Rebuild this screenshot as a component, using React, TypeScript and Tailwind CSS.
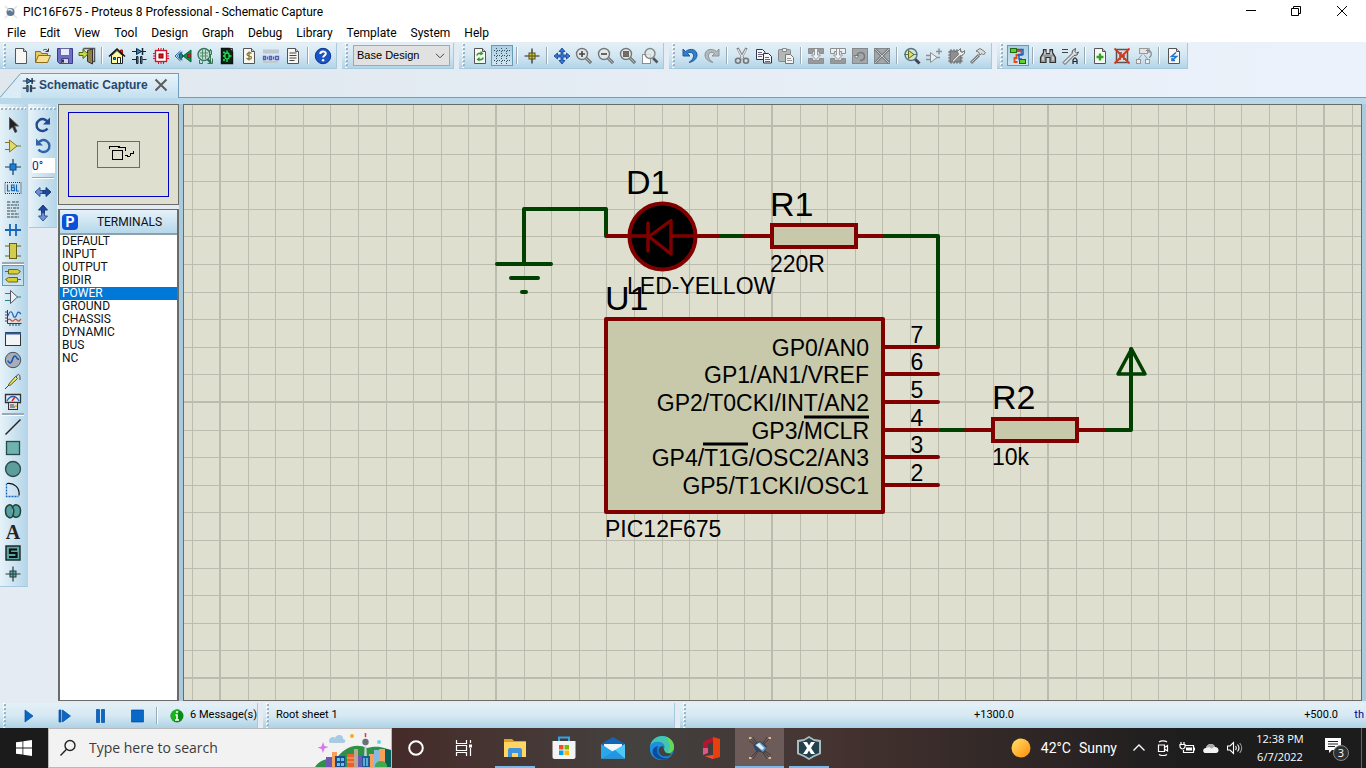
import React from "react";

type Kids = { children?: React.ReactNode };

function Ic({ children }: Kids) {
  return (
    <svg viewBox="0 0 18 18" className="size-[18px] shrink-0" fill="none" stroke="#333" strokeWidth="1">
      {children}
    </svg>
  );
}

const Page = ({ children }: Kids) => (
  <>
    <path d="M3.500 1.500h8l3 3v12h-11z" fill="#f7f8f6" stroke="#555" />
    <path d="M11.500 1.500v3h3" stroke="#555" fill="#ccc" />
    {children}
  </>
);

const Lens = ({ children }: Kids) => (
  <>
    <path d="M11 11l5 5" stroke="#555" strokeWidth="3" />
    <path d="M11 11l4.600 4.600" stroke="#bbb" strokeWidth="1.200" />
    <circle cx="7" cy="7" r="5.500" fill="#e4e8e8" fillOpacity=".75" stroke="#777" strokeWidth="1.400" />
    {children}
  </>
);

const schematicGlyph = (
  <>
    <path d="M2 4.500h14M2 12.500h4M12.500 12.500h4" stroke="#223" strokeWidth="1.200" />
    <path d="M6.500 1.500v6l5-3z" fill="#1c87d6" stroke="#123" />
    <path d="M12.500 1v7" stroke="#123" strokeWidth="1.500" />
    <path d="M6.500 9.500h1.500v7h-1.500zM10.500 9.500h1.500v7h-1.500z" fill="#3ba4ea" stroke="#123" />
  </>
);

const downTool = (filled: boolean) => (
  <>
    <path d="M1.500 1.500h15v5h-4v-2h-7v2h-4z" fill={filled ? "#999" : "#eee"} stroke="#8a8f92" />
    <path d="M1.500 11.500h4v2h7v-2h4v5h-15z" fill="#999" stroke="#8a8f92" />
    <path d="M7.500 2v6h-3l4.500 4.500 4.500-4.500h-3v-6" fill="#f2f2f2" stroke="#999" />
  </>
);

const icons: Record<string, React.ReactNode> = {
  New: <Page />,
  Open: (
    <>
      <path d="M1.500 15.500v-11h5l1 2h6v3" fill="#e8c965" stroke="#8a6d22" />
      <path d="M1.500 15.500l3-7h12l-3 7z" fill="#f9e08c" stroke="#8a6d22" />
      <path d="M9 3.500c2-2 4-1 5 .5M14.500 1.500v3h-3" stroke="#333" />
    </>
  ),
  Save: (
    <>
      <path d="M1.500 1.500h15v15h-13l-2-2z" fill="#6d6fc4" stroke="#3b3b87" />
      <path d="M4.500 1.500h9v7h-9z" fill="#e8eaf8" stroke="#6668a8" />
      <path d="M5.500 11.500h7v5h-7z" fill="#d5d5e5" stroke="#44448a" />
      <path d="M7 12.500v3" stroke="#333" strokeWidth="2" />
    </>
  ),
  Close: (
    <>
      <path d="M5.500 1.500h11v13h-3M5.500 1.500v2" stroke="#555" strokeWidth="1.500" />
      <path d="M9.500 3.500l5-1.500v15l-5-2.500z" fill="#8f8147" stroke="#333" />
      <path d="M1 5.500h4v-3l5 4.500-5 4.500v-3h-4z" fill="#c6dc3c" stroke="#54641a" />
    </>
  ),
  Home: (
    <>
      <path d="M12.500 7v-4h2v6" fill="#d22" stroke="#a11" />
      <path d="M3.500 8.500v8h11v-8l-5.500-5z" fill="#fff9a0" stroke="#222" />
      <path d="M1 9.500l8-7.500 8 7.500" stroke="#111" strokeWidth="1.500" />
      <path d="M5.500 10.500h2v2h-2z" fill="#2a8de0" />
      <path d="M9.500 10.500h3v6h-3z" fill="#fff" stroke="#222" />
    </>
  ),
  "Schematic Capture": schematicGlyph,
  "PCB Layout": (
    <>
      <path d="M6.500 1v16M9 1v16M11.500 1v16M1 6.500h16M1 9h16M1 11.500h16" stroke="#d3152a" />
      <rect x="3.500" y="3.500" width="11" height="11" fill="#fff" stroke="#d3152a" strokeWidth="1.400" />
      <rect x="7" y="7" width="4" height="4" fill="#d3152a" stroke="#800" />
    </>
  ),
  "3D Visualizer": (
    <>
      <path d="M9 9l8-6v12z" fill="#138a41" stroke="#064" />
      <path d="M13.500 7.500h3v3h-3z" fill="#c22" stroke="#822" />
      <path d="M6.500 4L1 9l5.500 5M3.500 9c1-2.500 3-3.500 5-4M3.500 9c1 2.500 3 3.500 5 4" stroke="#26a" />
      <ellipse cx="7" cy="9" rx="1.600" ry="2.600" fill="#138a8a" stroke="#155" />
    </>
  ),
  "Gerber Viewer": (
    <>
      <path d="M3.500 13v3.500h3v-2M11.500 16.500h5v-5M14.500 2v14" stroke="#337a55" />
      <circle cx="8" cy="7.500" r="6" fill="#c5ddd0" stroke="#36775a" strokeWidth="1.400" />
      <path d="M4 6h8M4 9h8M6.500 3v9M9.500 3v9" stroke="#4e9070" />
      <path d="M11.500 12l3.500 4" stroke="#2d6c4d" strokeWidth="2.200" />
      <path d="M13.500 3.500h2v4h-2z" fill="#9cd0a8" stroke="#36775a" />
    </>
  ),
  "Design Explorer": (
    <>
      <path d="M3.500 1.500h8l3 3v12h-11z" fill="#062b12" stroke="#111" strokeWidth="1.400" />
      <path d="M5 9h2M11 9h2.500M9 3.500v2.500M9 12v3M7 7.500c0-2 4-2 4 0v3c0 2-4 2-4 0zM5 5.500h2M5 13h2" stroke="#2be05d" strokeWidth="1.300" />
      <path d="M12 1.500h2.500v3z" fill="#ddd" />
    </>
  ),
  "Bill of Materials": (
    <Page>
      <path d="M11.500 6.500c-1-1.200-4.500-1.200-4.500 1 0 2 4.500 1 4.500 3 0 2.200-4 2-5 .600M9 4.500v9" stroke="#84722a" strokeWidth="1.200" />
    </Page>
  ),
  "Source Code": (
    <>
      <path d="M1 3.500h16M1 5.500h16" stroke="#c0c7d0" strokeWidth="2" />
      <path d="M1.500 9.500h2v3h-2zM5.500 9.500v3M7.500 9.500v3h2v-3zM11.500 9.500v3M13.500 9.500h3v3h-3z" stroke="#5c5ab8" strokeWidth="1.300" />
      <path d="M1 15h15" stroke="#c5b4a4" />
    </>
  ),
  "Project Notes": (
    <Page>
      <path d="M5.500 6h7M5.500 8.500h7M5.500 11h7M5.500 13.500h5" stroke="#444" strokeWidth="1.100" />
    </Page>
  ),
  Help: (
    <>
      <circle cx="9" cy="9" r="7.700" fill="#1c54c4" stroke="#0b3590" />
      <path d="M6.300 7c0-3.500 5.500-3.300 5.500-.4 0 1.900-2.700 1.900-2.700 4" stroke="#fff" strokeWidth="2" />
      <circle cx="9.100" cy="13.200" r="1.200" fill="#fff" stroke="none" />
    </>
  ),
  "Redraw Display": (
    <Page>
      <path d="M6 8.500c0-2.500 3-2.500 4.500-1.500M12 10.500c0 2.500-3 2.500-4.500 1.500" stroke="#2b9b22" strokeWidth="1.600" />
      <path d="M9.500 4v4.500l3-2zM8.500 10v4.500l-3-2z" fill="#2b9b22" stroke="none" />
    </Page>
  ),
  "Toggle Grid": (
    <path d="M1 3.500h16M1 8.500h16M1 13.500h16M3.500 1v16M8.500 1v16M13.500 1v16" stroke="#3e5058" strokeDasharray="1 1.500" shapeRendering="crispEdges" />
  ),
  "False Origin": (
    <>
      <path d="M9 1.500v15M1.500 9h15" stroke="#222" strokeWidth="1.200" />
      <rect x="6" y="6" width="6" height="6" fill="#d6c743" stroke="#565011" />
      <path d="M9 6v6M6 9h6" stroke="#565011" />
    </>
  ),
  "Centre At Cursor": (
    <path
      d="M9 1l3 3.500h-2v3.500h3.500v-2l3.500 3-3.500 3v-2h-3.500v3.500h2l-3 3.500-3-3.500h2v-3.500h-3.500v2l-3.500-3 3.500-3v2h3.500v-3.500h-2z"
      fill="#347bdb"
      stroke="#123d86"
      strokeWidth=".8"
    />
  ),
  "Zoom In": <Lens><path d="M4 7h6M7 4v6" stroke="#444" strokeWidth="1.600" /></Lens>,
  "Zoom Out": <Lens><path d="M4 7h6" stroke="#444" strokeWidth="1.600" /></Lens>,
  "Zoom All": <Lens><rect x="4.500" y="4.500" width="5" height="5" fill="#776b6b" stroke="#665" /></Lens>,
  "Zoom Area": (
    <>
      <rect x="1.500" y="7.500" width="8" height="9" fill="#fff" stroke="#333" strokeDasharray="1 1" />
      <path d="M12 11l4.500 4.500" stroke="#555" strokeWidth="2.600" />
      <circle cx="9" cy="6.500" r="5" fill="#dfe9e9" fillOpacity=".8" stroke="#888" strokeWidth="1.400" />
    </>
  ),
  Undo: (
    <path d="M2 2v7h7l-2.500-2.500c3-2.500 6.500-.5 6 3-.3 2.500-2 4-4.500 6 5-1 8-4 8-7.500 0-5.500-6.500-7.500-11.500-3.500z" fill="#3280cc" stroke="#1c569b" />
  ),
  Redo: (
    <path d="M16 2v7h-7l2.500-2.500c-3-2.500-6.500-.5-6 3 .3 2.500 2 4 4.500 6-5-1-8-4-8-7.500 0-5.500 6.500-7.500 11.500-3.500z" fill="#b4b9bc" stroke="#8c9194" />
  ),
  Cut: (
    <>
      <path d="M4.500 1l6 11M13.500 1l-6 11" stroke="#777" strokeWidth="2.600" />
      <path d="M4.800 2l5.500 10M13.200 2l-5.500 10" stroke="#e8e8e8" strokeWidth="1.200" />
      <circle cx="5" cy="13.800" r="2.500" stroke="#777" strokeWidth="1.600" />
      <circle cx="13" cy="13.800" r="2.500" stroke="#777" strokeWidth="1.600" />
    </>
  ),
  Copy: (
    <>
      <path d="M1.500 2.500h6l2.500 2.500v7.500h-8.500z" fill="#f5f5fb" stroke="#333355" />
      <path d="M3 5.500h4M3 7.500h5M3 9.500h4" stroke="#667" />
      <path d="M8.500 6.500h5l3 3v6.500h-8z" fill="#f5f5fb" stroke="#2c2c50" />
      <path d="M10 10.500h4M10 12.500h5M10 14.500h5" stroke="#667" />
    </>
  ),
  Paste: (
    <>
      <rect x="1.500" y="2.500" width="12" height="12" rx="1" fill="#b3b7b8" stroke="#84898b" />
      <path d="M5.500 1.500h4v3h-4z" fill="#eee" stroke="#84898b" />
      <path d="M8.500 7.500h5l3 3v6h-8z" fill="#f3f3f3" stroke="#777" />
      <path d="M10 11.500h4M10 13.500h5" stroke="#999" />
    </>
  ),
  "Block Copy": downTool(true),
  "Block Move": downTool(false),
  "Block Rotate": (
    <>
      <rect x="1.500" y="1.500" width="15" height="15" fill="#a3a7a9" stroke="#85898b" />
      <path d="M6 10c-.5-6 7.500-6 7.500-.5 0 3-2 4-4.500 4" stroke="#747a7d" strokeWidth="1.500" />
      <path d="M3 8.500h5l-2.500 3z" fill="#ddd" stroke="#747a7d" />
    </>
  ),
  "Block Delete": (
    <>
      <rect x="1.500" y="1.500" width="15" height="15" fill="#a3a7a9" stroke="#85898b" />
      <path d="M2 2l14 14M16 2L2 16" stroke="#747a7d" strokeWidth="2.600" />
      <path d="M2 2l14 14M16 2L2 16" stroke="#c6cacc" />
    </>
  ),
  "Pick Parts": (
    <>
      <path d="M11 11l5.500 5.500" stroke="#445" strokeWidth="3" />
      <circle cx="8" cy="7.500" r="6" fill="#cfe6d8" stroke="#5b7480" strokeWidth="1.400" />
      <path d="M1 7.500h13" stroke="#477" />
      <path d="M5.500 3.500v8l5.500-4z" fill="#e2dc57" stroke="#65651d" />
    </>
  ),
  "Make Device": (
    <>
      <path d="M1 8.500h4M1 12.500h4M10 10.500h5M11 4.500h6M14 1.500v6" stroke="#8b9093" strokeWidth="1.500" />
      <path d="M5.500 5.500v10l6.500-5z" fill="#eee" stroke="#8b9093" />
    </>
  ),
  "Packaging Tool": (
    <>
      <path d="M1 5h15M1 8h15M1 11h15M1 14h15M4 2v15M7 2v15M10 2v15M13 2v15" stroke="#777" />
      <rect x="3" y="4" width="11" height="11" fill="#8b8f90" stroke="#666" />
      <path d="M4.500 14.500l7-7-1-3 3-3v3l2 1 2-2v3l-3 2-2 .5-6 6z" fill="#eee" stroke="#777" />
    </>
  ),
  Decompose: (
    <>
      <path d="M2 16l8-8" stroke="#777" strokeWidth="3" />
      <path d="M2.500 15.500l7-7" stroke="#ccc" />
      <path d="M7 4l4-2.500 3 2 2.500 2-2 2.500-1.500-1.500-2 1.500-1.500-3z" fill="#ddd" stroke="#777" />
    </>
  ),
  "Wire Autorouter": (
    <>
      <path d="M8 4h4.500v4h-5v3h-2v4h3" stroke="#e24a18" strokeWidth="1.800" />
      <path d="M8 2.500h6v5h-4v4.500h3" stroke="#245fc2" strokeWidth="1.500" />
      <rect x="1.500" y="1.500" width="6" height="4" fill="#62d12d" stroke="#246811" />
      <rect x="10.500" y="12.500" width="6" height="4" fill="#62d12d" stroke="#246811" />
    </>
  ),
  Search: (
    <>
      <path d="M4.500 2.500h2.500v4h4v-4h2.500v3l3 5v5h-5.500v-5h-4v5h-5.500v-5l3-5z" fill="#999" stroke="#333" strokeWidth="1.200" />
      <path d="M4 9.500v4M14 9.500v4M6 4.500v3M12 4.500v3" stroke="#eee" strokeWidth="1.200" />
    </>
  ),
  "Property Assignment": (
    <>
      <path d="M1 2.500h6M1 5.500h6" stroke="#444" strokeWidth="1.200" />
      <path d="M2 15.500l9-9 .5-3 3-2-.5 3 1.500 1.500 2-1-1.500 3-3 .5-9 9z" fill="#ddd" stroke="#555" />
      <path d="M12 17v-4l1.500-2h1l1.500 2v4M12 14.500h4" stroke="#222" strokeWidth="1.200" />
    </>
  ),
  "New Sheet": <Page><path d="M9 6.500v7M5.500 10h7" stroke="#31a21b" strokeWidth="2.400" /></Page>,
  "Remove Sheet": (
    <>
      <rect x="3.500" y="2.500" width="11" height="13" fill="#ddd" stroke="#555" strokeWidth="1.500" />
      <path d="M6 6h3M6 9h6M10 12h3M6 12h2" stroke="#555" strokeWidth="1.500" />
      <path d="M1.500 1.500l15 15M16.500 1.500l-15 15" stroke="#d5381f" strokeWidth="1.900" />
    </>
  ),
  "Exit To Parent": (
    <>
      <path d="M7 7.500l-4 5M9 7.500l4 5" stroke="#999" />
      <rect x="4.500" y="1.500" width="8" height="5" fill="#e3e3e3" stroke="#999" />
      <rect x="1.500" y="12.500" width="4" height="4" fill="#eee" stroke="#999" />
      <rect x="10.500" y="12.500" width="4" height="4" fill="#eee" stroke="#999" />
      <path d="M11 3.500h3c3 1 3 6 0 7M14 1v5" stroke="#888" strokeWidth="1.200" />
    </>
  ),
  "Electrical Rule Check": <Page><path d="M11 5.500l-4.500 4h5l-4.500 4M7 11v2.500h3" stroke="#2275cb" strokeWidth="1.600" /></Page>,
  Selection: <path d="M5.500 1.500v12l3-2.500 2.500 5.500 2-1-2.500-5.500h4z" fill="#222" stroke="#555" />,
  Component: (
    <>
      <path d="M1 5.500h4M1 12.500h4M12 9h5" stroke="#80782a" />
      <path d="M5.500 3v12l7.500-6z" fill="#e2da62" stroke="#80782a" />
    </>
  ),
  Junction: (
    <>
      <path d="M9 1v16M1 9h16" stroke="#123a5c" strokeWidth="1.200" />
      <rect x="6" y="6" width="6" height="6" fill="#1c7ed6" stroke="#0e4a8a" />
    </>
  ),
  "Wire Label": (
    <>
      <rect x="1" y="3.500" width="16" height="11" stroke="#333" strokeDasharray="1 1" />
      <path d="M3.500 5.500v6.500h2.500M7.500 5.500v6.500M7.500 6h2.500v2.700h-2.500M7.500 11.700h3v-3M12.500 5.500v6.500h2.500" stroke="#1265b8" strokeWidth="1.200" />
    </>
  ),
  "Text Script": <path d="M3 2h4M8 2h7M3 5h12M3 8h5M9 8h6M3 11h9M3 14h3M7 14h8M3 17h12" stroke="#3c4244" strokeWidth="1.200" strokeDasharray="3 .7" />,
  Bus: <path d="M1 9h16M6 3v6M12 3v6M6 9v6M12 9v6" stroke="#1565bd" strokeWidth="1.800" />,
  Subcircuit: (
    <>
      <path d="M1 4h4M1 14h4M13 4h4M13 14h4" stroke="#666014" />
      <rect x="5.500" y="1.500" width="7" height="15" fill="#d4cc4e" stroke="#666014" />
    </>
  ),
  Terminals: (
    <>
      <path d="M4.500 2.500h9l3 2-3 2.500h-9zM13.500 10.500h-9l-3 2 3 2.500h9z" fill="#d8cd35" stroke="#6b6518" />
      <path d="M1 4.500h3M14 12.500h3" stroke="#6b6518" />
    </>
  ),
  "Device Pins": (
    <>
      <path d="M6.500 2.500v13l7-6.500z" stroke="#556" fill="#e9f2f5" />
      <path d="M1 5.500h5M1 12.500h5M13 9h4" stroke="#178b7d" strokeWidth="1.200" />
    </>
  ),
  Graph: (
    <>
      <path d="M3.500 1v13.500h14" stroke="#334" />
      <path d="M1 3h3M1 6h3M1 9h3M1 12h3M6 14v3M9 14v3M12 14v3M15 14v3" stroke="#445" />
      <path d="M4 7c2-6 4-5 5-1s3 2 4-1 2-2 4 0" stroke="#2265bb" strokeWidth="1.200" />
      <path d="M4 11c2-3 3 2 5 1s2-3 4-1 2 1 4-1" stroke="#d84c22" strokeWidth="1.200" />
    </>
  ),
  "Active Popup": (
    <>
      <rect x="1.500" y="2.500" width="15" height="13" fill="#f3f4f6" stroke="#333" />
      <path d="M1 3.500h16" stroke="#285ca8" strokeWidth="2" />
    </>
  ),
  Generator: (
    <>
      <circle cx="9" cy="9" r="7.700" fill="#a8aeb8" stroke="#4a515c" />
      <path d="M3.500 10c1.500 0 1 2 2.500 2 3 0 2-7 5-7 2 0 1 4 4 3" stroke="#1655af" strokeWidth="1.500" />
    </>
  ),
  Probe: (
    <>
      <path d="M1 17l4-4M12 5c2-4 4-3 4 1v2" stroke="#444" />
      <path d="M4.500 12.500l7-8 2 2-7.500 7z" fill="#f4ed60" stroke="#545018" />
    </>
  ),
  Instruments: (
    <>
      <path d="M1.500 1.500h15v8h-15z" fill="#e5edf5" stroke="#333" strokeWidth="1.300" />
      <path d="M3 8c3-6 9-6 12 0" stroke="#1b65b9" strokeWidth="1.300" />
      <path d="M8 8l3-4" stroke="#d22" strokeWidth="1.500" />
      <rect x="4.500" y="9.500" width="9" height="7" fill="#ddd" stroke="#333" />
      <path d="M6 12h4M6 14h5" stroke="#444" />
      <path d="M11 13h2" stroke="#d7c51b" strokeWidth="2" />
    </>
  ),
  Line: <path d="M1.500 16.500l15-15" stroke="#222" strokeWidth="1.400" />,
  Box: <rect x="2.500" y="2.500" width="13" height="13" fill="#6fb3b0" stroke="#29494a" strokeWidth="1.300" />,
  Circle: <circle cx="9" cy="9" r="7.500" fill="#5d9d9b" stroke="#29494a" strokeWidth="1.300" />,
  Arc: (
    <>
      <path d="M2.500 2.500v13h12" stroke="#1266c0" strokeWidth="1.300" strokeDasharray="2 1" />
      <path d="M3 2.500c7-1 13 4 12 12" stroke="#111" strokeWidth="1.200" />
    </>
  ),
  "Closed Path": <path d="M8.500 6c0-5-7-4-7 3s7 9 7.500 4c1 4 7.500 3 7.500-4s-7-8-8-3c1.500 1 1.500 4 .5 7" fill="#56a09d" stroke="#23403f" strokeWidth="1.500" />,
  Symbol: (
    <>
      <rect x="2" y="2" width="14" height="14" fill="#5da6a2" stroke="#162324" strokeWidth="1.400" />
      <path d="M13 5.500h-7v3.500h6.500v4h-7.500" stroke="#0b0f10" strokeWidth="2.200" />
    </>
  ),
  Marker: (
    <>
      <path d="M9 1.500v15M1.500 9h15" stroke="#263c3c" strokeWidth="1.200" />
      <rect x="6" y="6" width="6" height="6" fill="#62aaa3" stroke="#263c3c" />
      <path d="M9 6v6M6 9h6" stroke="#263c3c" />
    </>
  ),
  "Rotate Clockwise": (
    <>
      <path d="M13.500 12.500a6 6 0 1 1 .5-6" stroke="#234a90" strokeWidth="2.400" />
      <path d="M16 1.500v7h-7z" fill="#234a90" stroke="none" />
    </>
  ),
  "Rotate Anti-clockwise": (
    <>
      <path d="M4.500 12.500a6 6 0 1 0-.5-6" stroke="#3163a8" strokeWidth="2.400" />
      <path d="M2 1.500v7h7z" fill="#3163a8" stroke="none" />
    </>
  ),
  "X-Mirror": (
    <>
      <path d="M1 9l5-4.500v3h3v3h-3v3z" fill="#6b93dd" stroke="#36568f" />
      <path d="M17 9l-5-4.500v3h-3v3h3v3z" fill="#1d4aa0" stroke="#1b3a77" />
    </>
  ),
  "Y-Mirror": (
    <>
      <path d="M9 1l4.500 5h-3v3h-3v-3h-3z" fill="#1d4aa0" stroke="#1b3a77" />
      <path d="M9 17l4.500-5h-3v-3h-3v3h-3z" fill="#6b93dd" stroke="#36568f" />
    </>
  ),
};

const ui = "font-['Open_Sans','Noto_Sans',sans-serif]";
const compact = "font-[Roboto,'Noto_Sans',sans-serif]";
const sys = "font-['Liberation_Sans',Arial,sans-serif]";

function HGrip() {
  return (
    <svg className="h-full w-2.5 shrink-0" aria-hidden="true">
      <defs>
        <pattern id="hgrip" width="10" height="4" patternUnits="userSpaceOnUse">
          <rect x="3" y="0" width="2" height="2" fill="#fff" />
          <rect x="4" y="1" width="2" height="2" fill="#9fb4c1" />
        </pattern>
      </defs>
      <rect width="10" height="100%" fill="url(#hgrip)" />
    </svg>
  );
}

function VGrip() {
  return (
    <svg className="h-2.5 w-full shrink-0" aria-hidden="true">
      <defs>
        <pattern id="vgrip" width="4" height="10" patternUnits="userSpaceOnUse">
          <rect x="0" y="3" width="2" height="2" fill="#fff" />
          <rect x="1" y="4" width="2" height="2" fill="#9fb4c1" />
        </pattern>
      </defs>
      <rect width="100%" height="10" fill="url(#vgrip)" />
    </svg>
  );
}

function ToolButton({ name, pressed }: { name: string; pressed?: boolean }) {
  return (
    <button
      title={name}
      aria-label={name}
      className={
        pressed
          ? "flex h-[21px] w-[22px] shrink-0 items-center justify-center border border-[#6799b8] bg-linear-to-b from-[#a9cfe4] to-[#cfe5f1]"
          : "flex h-[21px] w-[22px] shrink-0 items-center justify-center"
      }
    >
      {name === "Text" ? (
        <span className="font-['Liberation_Serif',serif] text-xl leading-4 font-bold text-[#222]">A</span>
      ) : (
        <Ic>{icons[name]}</Ic>
      )}
    </button>
  );
}

function ToolGroup({ items, children }: { items?: string[]; children?: React.ReactNode }) {
  return (
    <div className="flex h-[26px] shrink-0 items-center border-r border-b border-[#a6c9de] bg-linear-to-b from-[#e4f0f7] via-[#d3e7f2] to-[#b3d5e8] pr-0.5">
      <HGrip />
      {items?.map((n, i) =>
        n === "|" ? (
          <span key={i} className="mx-[3px] h-[17px] w-0.5 border-r border-white bg-[#9aa9b3]" />
        ) : (
          <ToolButton key={n} name={n} pressed={n === "Toggle Grid" || n === "Wire Autorouter"} />
        ),
      )}
      {children}
    </div>
  );
}

const menus = ["File", "Edit", "View", "Tool", "Design", "Graph", "Debug", "Library", "Template", "System", "Help"];
const projectTools = ["New", "Open", "Save", "Close", "|", "Home", "Schematic Capture", "PCB Layout", "3D Visualizer", "Gerber Viewer", "Design Explorer", "Bill of Materials", "Source Code", "Project Notes", "|", "Help"];
const viewTools = ["Redraw Display", "Toggle Grid", "|", "False Origin", "|", "Centre At Cursor", "Zoom In", "Zoom Out", "Zoom All", "Zoom Area"];
const editTools = ["Undo", "Redo", "|", "Cut", "Copy", "Paste", "|", "Block Copy", "Block Move", "Block Rotate", "Block Delete", "|", "Pick Parts", "Make Device", "Packaging Tool", "Decompose"];
const designTools = ["Wire Autorouter", "|", "Search", "Property Assignment", "|", "New Sheet", "Remove Sheet", "Exit To Parent", "|", "Electrical Rule Check"];
const modeTools = ["Selection", "Component", "Junction", "Wire Label", "Text Script", "Bus", "Subcircuit", "|", "Terminals", "Device Pins", "Graph", "Active Popup", "Generator", "Probe", "Instruments", "|", "Line", "Box", "Circle", "Arc", "Closed Path", "Text", "Symbol", "Marker"];
const terminals = ["DEFAULT", "INPUT", "OUTPUT", "BIDIR", "POWER", "GROUND", "CHASSIS", "DYNAMIC", "BUS", "NC"];

function TitleBar() {
  return (
    <header className={`bg-white text-xs text-black ${compact}`}>
      <div className="flex h-6 items-center">
        <svg viewBox="0 0 16 16" className="mr-1 ml-[3px] size-4" aria-hidden="true">
          <path d="M2 2l12 12M14 2L2 14" stroke="#e3e3e3" strokeWidth="1.500" />
          <circle cx="7.500" cy="8" r="4" fill="#5f7890" />
          <path d="M4.500 6.500c2-2 4-1 5 1" stroke="#dfe8f0" strokeWidth="1.500" fill="none" />
        </svg>
        <h1 className="flex-1">PIC16F675 - Proteus 8 Professional - Schematic Capture</h1>
        <button aria-label="Minimize" className="flex h-5 w-[45px] items-center justify-center">
          <svg viewBox="0 0 12 12" className="size-3" stroke="#000"><path d="M1 4.500h10" /></svg>
        </button>
        <button aria-label="Restore" className="flex h-5 w-[45px] items-center justify-center">
          <svg viewBox="0 0 12 12" className="size-3" stroke="#000" fill="none"><path d="M1.500 2.500h7v7h-7zM3.500 2.500v-2h7v7h-2" /></svg>
        </button>
        <button aria-label="Close window" className="flex h-5 w-12 items-center justify-center">
          <svg viewBox="0 0 12 12" className="size-3" stroke="#000"><path d="M1 0l10 10M11 0L1 10" /></svg>
        </button>
      </div>
      <nav className="flex h-[18px] items-center">
        {menus.map((m) => (
          <button key={m} className="px-[7px] leading-[18px]">{m}</button>
        ))}
      </nav>
    </header>
  );
}

const pins = [
  { n: "7", y: 347 },
  { n: "6", y: 374 },
  { n: "5", y: 402 },
  { n: "4", y: 430 },
  { n: "3", y: 457 },
  { n: "2", y: 485 },
];
const pinLabels = ["GP0/AN0", "GP1/AN1/VREF", "GP2/T0CKI/INT/AN2", "GP3/MCLR", "GP4/T1G/OSC2/AN3", "GP5/T1CKI/OSC1"];

function gridLines(origin: number, count: number) {
  return Array.from({ length: count }, (_, i) => ({ at: Math.round(origin + (i - 2) * 27.6), major: (i - 2) % 10 === 0 }));
}

function Schematic() {
  return (
    <svg className="h-full w-full" role="img" aria-label="PIC12F675 schematic">
      <g transform="translate(-184 -105)">
        <g stroke="#bbbcad" shapeRendering="crispEdges">
          {gridLines(220, 100).map((l) => (
            <path key={l.at} d={`M${l.at}${l.major ? "" : ".500"} 105v1400`} strokeWidth={l.major ? 2 : 1} />
          ))}
          {gridLines(126, 60).map((l) => (
            <path key={l.at} d={`M184 ${l.at}${l.major ? "" : ".500"}h2700`} strokeWidth={l.major ? 2 : 1} />
          ))}
        </g>
        <g fill="none" stroke="#004000" strokeWidth="4" strokeLinecap="round" strokeLinejoin="round">
          <path d="M524 264V209H606V236M497 264h54M511 278h27M522 292h4" />
          <path d="M719 236h24M883 236h55v110M940 430h26M1104 430h27V349" />
          <path d="M1131.500 349l-13.500 25h27z" strokeWidth="3.500" />
        </g>
        <g fill="none" stroke="#800000" strokeWidth="4" strokeLinecap="round" strokeLinejoin="round">
          <path d="M607 236h22M698 236h20M744 236h27M858 236h24M966 430h26M1078 430h26" />
          <circle cx="662.500" cy="236.500" r="33" fill="#000" />
          <path d="M630 236h18M671 236h24M648 223v28M671 220.500v33.500L649 236.500z" strokeWidth="3.400" />
          <rect x="772" y="225" width="84" height="22" fill="#c8c8aa" strokeLinejoin="miter" />
          <rect x="993" y="419" width="84" height="22" fill="#c8c8aa" strokeLinejoin="miter" />
          <rect x="606" y="319" width="277" height="193" fill="#c8c8aa" />
          {pins.map((p) => (
            <path key={p.n} d={`M884 ${p.y}h54`} />
          ))}
        </g>
        <path d="M804 417h65M703 444h45" stroke="#000" strokeWidth="3" />
        <g className={`fill-black ${sys}`} fontSize="23">
          {pins.map((p, i) => (
            <React.Fragment key={p.n}>
              <text x="917" y={p.y - 4} textAnchor="middle">{p.n}</text>
              <text x="869" y={p.y + 9} textAnchor="end">{pinLabels[i]}</text>
            </React.Fragment>
          ))}
          <text x="627" y="294">LED-YELLOW</text>
          <text x="770" y="272">220R</text>
          <text x="992" y="465">10k</text>
          <text x="605" y="537">PIC12F675</text>
        </g>
        <g className={`fill-black ${sys}`} fontSize="34">
          <text x="626" y="194">D1</text>
          <text x="770" y="216">R1</text>
          <text x="992" y="409">R2</text>
          <text x="605" y="310">U1</text>
        </g>
      </g>
    </svg>
  );
}

function ModeBar() {
  return (
    <div className="flex w-7 flex-col items-center self-start border-b border-[#a6c9de] bg-linear-to-r from-[#e6f2f9] to-[#b3d5e8] pr-0.5 pb-0.5">
      <VGrip />
      {modeTools.map((n, i) =>
        n === "|" ? (
          <span key={i} className="mt-px h-[3px] w-[22px] border-b border-white bg-[#9aa9b3]" />
        ) : (
          <ToolButton key={n} name={n} pressed={n === "Terminals"} />
        ),
      )}
    </div>
  );
}

function OrientationBar() {
  return (
    <div className="mr-px ml-px flex w-7 flex-col items-center self-start border-b border-[#a6c9de] bg-linear-to-r from-[#e6f2f9] to-[#b3d5e8] pb-1">
      <VGrip />
      <ToolButton name="Rotate Clockwise" />
      <ToolButton name="Rotate Anti-clockwise" />
      <input
        aria-label="Rotation angle"
        defaultValue="0°"
        className={`my-0.5 mr-0.5 h-[15px] w-[23px] self-end bg-white text-xs text-[#222288] ${compact}`}
      />
      <span className="my-0.5 h-0.5 w-[22px] border-b border-white bg-[#9aa9b3]" />
      <ToolButton name="X-Mirror" />
      <ToolButton name="Y-Mirror" />
    </div>
  );
}

function SidePanel() {
  return (
    <aside className="flex w-[121px] shrink-0 flex-col gap-1">
      <div className="h-[101px] border border-[#6b6b68] bg-[#dfdfd0] px-[9px] py-[7px]">
        <svg viewBox="0 0 101 85" className="h-[85px] w-full" role="img" aria-label="Sheet overview" fill="none" shapeRendering="crispEdges">
          <rect x=".5" y=".5" width="100" height="84" stroke="#0000c0" />
          <rect x="29.500" y="29.500" width="42" height="26" stroke="#00b400" />
          <path d="M44.500 38.500h10v9h-10zM41 37v-3h11M47 34h2M56 36v-1M50 35h7v4M57 43h3M59 44h3l1-3M62 41h3v-2" stroke="#000" />
        </svg>
      </div>
      <section className={`flex flex-1 flex-col border-x-2 border-t border-b border-[#6b6b68] bg-white text-xs text-[#111] ${compact}`}>
        <div className="flex h-[25px] items-center border-b-2 border-[#8da0ac] bg-linear-to-b from-[#e6f2f9] to-[#b6d7ea] pl-0.5">
          <button aria-label="Pick terminals" className="flex size-4 items-center justify-center rounded-sm bg-[#0b50d8] text-sm leading-4 font-bold text-white">P</button>
          <h2 className="flex-1 pl-1 text-center">TERMINALS</h2>
        </div>
        <ul>
          {terminals.map((t) => (
            <li key={t}>
              <button
                className={
                  t === "POWER"
                    ? "block h-[13px] w-full bg-[#0078d7] pl-0.5 text-left leading-[13px] text-white"
                    : "block h-[13px] w-full pl-0.5 text-left leading-[13px]"
                }
              >
                {t}
              </button>
            </li>
          ))}
        </ul>
      </section>
    </aside>
  );
}

const simControls = [
  { name: "Play", d: "M6 3v12l8-6z" },
  { name: "Step", d: "M3 3h2v12h-2zM6.500 3v12l8-6z" },
  { name: "Pause", d: "M4.500 2.500h3v13h-3zM9.500 2.500h3v13h-3z" },
  { name: "Stop", d: "M2.500 3h12v12h-12z" },
];

function StatusBar() {
  const seg = "flex h-[25px] items-center bg-linear-to-b from-[#e4f0f7] via-[#d6e9f3] to-[#aed2e6]";
  return (
    <footer className={`mt-0.5 flex gap-[5px] text-[11px] text-black ${compact}`}>
      <div className={`${seg} w-[258px] border-r border-[#a6c9de]`}>
        <HGrip />
        {simControls.map((c) => (
          <button key={c.name} aria-label={c.name} className="flex w-[37px] justify-center">
            <svg viewBox="0 0 18 18" className="size-[18px]"><path d={c.d} fill="#0868c8" stroke="#07499a" strokeWidth=".7" /></svg>
          </button>
        ))}
        <span className="mr-3 h-[17px] w-0.5 border-r border-white bg-[#9aa9b3]" />
        <button className="flex items-center gap-1.5 whitespace-nowrap">
          <svg viewBox="0 0 14 14" className="size-3.5" aria-hidden="true">
            <circle cx="7" cy="7" r="6.500" fill="#0b8a12" />
            <path d="M1 5a6.500 6.500 0 0 1 9-4L4 12A6 6 0 0 1 1 5z" fill="#19b51f" />
            <path d="M7 5.500v5.500M5.500 6h2M5 11h4M6 3h2" stroke="#fff" strokeWidth="1.600" />
          </svg>
          6 Message(s)
        </button>
      </div>
      <div className={`${seg} w-[412px] border-r border-[#a6c9de]`}>
        <HGrip />
        <span className="pl-[3px]">Root sheet 1</span>
      </div>
      <div className={`${seg} flex-1`}>
        <HGrip />
        <span className="flex-1 pl-[284px]">+1300.0</span>
        <span>+500.0</span>
        <span className="w-7 pr-0.5 text-right text-[#0000a0]">th</span>
      </div>
    </footer>
  );
}

function City() {
  return (
    <svg viewBox="0 0 76 38" className="h-[38px] w-[76px] shrink-0 self-end" aria-hidden="true">
      <path d="M0 38c5-8 14-9 20-7 8-12 20-18 32-12 12-3 20 0 24 4v15z" fill="#2f9147" />
      <path d="M56 38c0-16 9-21 20-17v17z" fill="#08605a" />
      <path d="M14 12c0-4 5-5 6-3 2-5 9-3 8 1 3 0 3 4 0 4H16c-2 0-2-1-2-2z" fill="#a7cbe2" />
      <path d="M8 13l1.500 4 4 1-4 1.500L8 24l-1.500-4-4-1.500 4-1z" fill="#d779ed" />
      <circle cx="37" cy="7" r="2" fill="#f8ae18" />
      <circle cx="64" cy="13" r="2" fill="#62d8e4" />
      <path d="M49.500 38l1-34 1 34z" fill="#b9bec6" stroke="#d9dde2" />
      <path d="M50.500 4v4" stroke="#d83c3c" strokeWidth="1.500" />
      <circle cx="50.500" cy="13" r="3.200" fill="#69707a" />
      <path d="M11 28h7v10h-7zM42 26h6v12h-6z" fill="#6d58b5" />
      <path d="M17 23h5v15h-5zM54 25h5v13h-5zM64 20h6v18h-6z" fill="#f6a05a" />
      <path d="M20 27h10v11H20z" fill="#1c4d86" />
      <path d="M22 29h3v3h-3zM26 29h3v3h-3zM22 34h3v3h-3zM26 34h3v3h-3z" fill="#5fc4ee" />
      <path d="M32 25h7v13h-7z" fill="#e8632c" />
      <path d="M32 29h7M32 33h7" stroke="#ffb084" />
      <path d="M39 20h4v18h-4z" fill="#bba894" />
      <path d="M47 27h8v11h-8z" fill="#205a93" />
      <path d="M49 29v8M52 29v8" stroke="#6cc9ef" strokeWidth="1.500" />
      <path d="M59 21h5v17h-5z" fill="#86bbdf" />
      <ellipse cx="66" cy="37" rx="6" ry="5" fill="#3fab4d" />
    </svg>
  );
}

const apps: { name: string; state?: "open" | "active"; art: React.ReactNode }[] = [
  {
    name: "File Explorer",
    state: "open",
    art: (
      <>
        <path d="M1 3h8l2 2h12v16H1z" fill="#e5a11b" />
        <path d="M1 6h22v15H1z" fill="#ffd664" />
        <path d="M5 14q0-2 2-2h10q2 0 2 2v7h-4v-4H9v4H5z" fill="#3d93dc" />
      </>
    ),
  },
  {
    name: "Microsoft Store",
    art: (
      <>
        <path d="M7 6V1.500h10V6" stroke="#2ea5e8" strokeWidth="2" fill="none" />
        <path d="M.5 5h23v16q0 2-2 2h-19q-2 0-2-2z" fill="#f4f4f4" />
        <path d="M7 9h4.500v4.500H7z" fill="#f25022" />
        <path d="M12.500 9H17v4.500h-4.500z" fill="#7fba00" />
        <path d="M7 14.500h4.500V19H7z" fill="#00a4ef" />
        <path d="M12.500 14.500H17V19h-4.500z" fill="#ffb900" />
      </>
    ),
  },
  {
    name: "Mail",
    art: (
      <>
        <path d="M0 8l12-7 12 7v14H0z" fill="#1464b4" />
        <path d="M3 8h18v6l-9 4-9-4z" fill="#f3f7fb" />
        <path d="M0 8l14 9-14 5.500z" fill="#28a8ea" />
        <path d="M24 8v14.500H0L14 14z" fill="#50c8f5" />
        <path d="M14 14l10 8.500H0z" fill="#2196e3" />
      </>
    ),
  },
  {
    name: "Edge",
    art: (
      <>
        <circle cx="12" cy="12" r="12" fill="#1683d8" />
        <path d="M0 11C1 4 6 0 12 0c8 0 12 6 12 11 0 4-3 6-6 6-4 0-5-2-4-4 2-3-1-7-5-7-4 0-8 2-9 5z" fill="#42c6b2" />
        <path d="M15 .5C21 2 24 7 24 11c0 4-3 6-6 6 3-5 2-12-3-16.500z" fill="#62d957" />
        <path d="M0 11c1-4 5-6 9-5 3 .5 5 3 5 5-4-2-8 1-7 6 .5 3 2 5 5 7C4 24-1 18 0 11z" fill="#1e8fdc" />
        <path d="M8 10c-3 7 2 14 11 12-4 3-12 2-15-2-3-5-1-9 4-10z" fill="#0d4b9d" />
        <path d="M14 13.500c-.8-1-.8-2-.3-3-3-1-5 1-5 4 0 5 6 8 13 4l-3-1c-3 0-4-2-4.700-4z" fill="#43403f" />
      </>
    ),
  },
  {
    name: "Office",
    art: (
      <>
        <path d="M14 1l7 2v18l-7 2-9-3 9 1z" fill="#e8400c" />
        <path d="M14 1v5l-5 2v9l-5 2V6z" fill="#b6152e" />
        <path d="M4 12v7l5-2v-5z" fill="#d85a85" />
        <path d="M6 20l8-1v4z" fill="#f34a3c" />
      </>
    ),
  },
  {
    name: "Proteus",
    state: "active",
    art: (
      <>
        <path d="M2 2l20 20M22 2L2 22M5 1l14 22M1 5l22 14M19 1L5 23" stroke="#3f3836" strokeWidth=".8" />
        <path d="M5 9l7-4 7 5-3 7-8-2z" fill="#33465c" />
        <path d="M7 9l5-3 6 6-3 4z" fill="#6ba5d6" />
        <path d="M8 9l3-2 5 5-2 2z" fill="#e2eef8" />
        <path d="M1 2h2.500M20.500 2H23M1 22h2.500M20.500 22H23" stroke="#e0b98f" strokeWidth="2" />
      </>
    ),
  },
  {
    name: "MPLAB X",
    state: "open",
    art: (
      <>
        <path d="M12 0l5 3 7 1v14l-7 3-5 3-5-3-7-3V4l7-1z" fill="#a8bcc2" />
        <path d="M12 2l5 3 5 1v11l-5 2-5 3-5-3-5-2V6l5-1z" fill="#22414b" />
        <path d="M6 6h4l2 3.500L14 6h4l-4 6 4 6h-4l-2-3.500L10 18H6l4-6z" fill="#fff" />
      </>
    ),
  },
];

function Taskbar() {
  return (
    <div className={`flex h-10 items-center bg-linear-to-r from-[#1b1b1b] from-[10%] via-[#463330] via-[60%] to-[#1c1c1d] to-[88%] text-white ${ui}`}>
      <button aria-label="Start" className="flex h-full w-12 items-center justify-center">
        <svg viewBox="0 0 16 16" className="size-4" fill="#fff"><path d="M0 2.300l6.500-.9v6.200H0zM7.300 1.300L16 0v7.600H7.300zM0 8.400h6.500v6.200L0 13.700zM7.300 8.400H16V16l-8.700-1.300z" /></svg>
      </button>
      <label className="flex h-full w-[344px] items-center overflow-hidden border border-[#b9b9b9] bg-[#f2f2f2] pl-2.5 text-[#333]">
        <svg viewBox="0 0 18 18" className="mr-3 size-[18px] shrink-0" fill="none" stroke="#222" strokeWidth="1.400">
          <circle cx="11" cy="6.500" r="5" />
          <path d="M7.500 10.200L1.500 16.500" />
        </svg>
        <input aria-label="Search" placeholder="Type here to search" className="min-w-0 flex-1 bg-transparent text-sm placeholder:text-[#3c3c3c]" />
        <City />
      </label>
      <div className="flex h-full flex-1 bg-linear-to-r from-[#452b29] via-[#444240] via-[40%] to-transparent to-[75%]">
        <button aria-label="Cortana" className="flex h-full w-12 items-center justify-center">
          <svg viewBox="0 0 18 18" className="size-[18px]" fill="none" stroke="#fff" strokeWidth="2"><circle cx="9" cy="9" r="6.800" /></svg>
        </button>
        <button aria-label="Task View" className="mr-0.5 flex h-full w-12 items-center justify-center">
          <svg viewBox="0 0 18 18" className="size-[18px]" fill="none" stroke="#fff" strokeWidth="1.200">
            <path d="M1.500 1v3.500h10V1M1.500 17v-3.500h10V17M1.500 6.500h10v5h-10zM15.500 1v3M15.500 9v8" />
            <path d="M14 5.500h3v3h-3z" fill="#fff" stroke="none" />
          </svg>
        </button>
        {apps.map((a) => (
          <button
            key={a.name}
            aria-label={a.name}
            className={a.state === "active" ? "flex h-full w-[49px] flex-col items-center bg-[#6d5b59]" : "flex h-full w-[49px] flex-col items-center"}
          >
            <span className="flex flex-1 items-center pt-0.5">
              <svg viewBox="0 0 24 24" className="size-6">{a.art}</svg>
            </span>
            <span className={a.state === "active" ? "h-0.5 w-full bg-[#76b9ed]" : a.state === "open" ? "h-0.5 w-10 bg-[#76b9ed]" : "h-0.5 w-10"} />
          </button>
        ))}
      </div>
      <div className="flex h-full items-center">
        <button className="flex items-center gap-2 pr-3.5 text-sm whitespace-nowrap">
          <svg viewBox="0 0 20 20" className="mr-0.5 size-5" aria-hidden="true">
            <defs>
              <linearGradient id="sun" x1="0" y1="0" x2="1" y2="1">
                <stop offset="0" stopColor="#ffe36a" />
                <stop offset="1" stopColor="#ff8c0a" />
              </linearGradient>
            </defs>
            <circle cx="10" cy="10" r="9.500" fill="url(#sun)" />
          </svg>
          <span className={compact}>42°C</span>
          <span className={compact}>Sunny</span>
        </button>
        <div className="flex items-center gap-2">
          <svg viewBox="0 0 16 16" className="size-4" fill="none" stroke="#fff" strokeWidth="1.300"><path d="M2.500 10.500L8 5l5.500 5.500" /></svg>
          <svg viewBox="0 0 16 16" className="size-4" fill="none" stroke="#fff" strokeWidth="1.200">
            <path d="M3.500 5h6v6.500h-6zM9.500 7.500l3-2v5.500l-3-2M4 2c2-1.500 6-1.500 8 0M4 14.500c2 1.500 6 1.500 8 0" />
          </svg>
          <svg viewBox="0 0 16 16" className="size-4" fill="none" stroke="#fff" strokeWidth="1.200">
            <path d="M6 5.500h8.500v7H4.500V10M1 4.500h5v2.500q-1 2-2.500 2T1 7zM2 2v2.500M5 2v2.500M15.500 7.500v3" />
            <path d="M7 7.500h6v3H7z" fill="#fff" stroke="none" />
          </svg>
          <svg viewBox="0 0 16 16" className="size-4"><path d="M2 13c-3-1-2-5 1-5 1-5 8-5 9-1 4 0 5 5 1 6z" fill="#f3f3f3" /><path d="M3 8c1-5 8-5 9-1-2 0-3 1-3 2-2-2-4-2-6-1z" fill="#a9a9a9" /></svg>
          <svg viewBox="0 0 16 16" className="size-4" fill="none" stroke="#fff" strokeWidth="1.100">
            <path d="M.5 6h2.500l3.500-3.500v11L3 10H.5zM8.500 6q1.500 2 0 4M10.500 4.500q3 3.500 0 7" />
            <path d="M12.700 3q4 5 0 10" stroke="#999" />
          </svg>
        </div>
        <button className="ml-2.5 w-[54px] text-center text-[11px] leading-[18px] whitespace-nowrap">
          12:38 PM
          <br />
          6/7/2022
        </button>
        <button aria-label="3 notifications" className="ml-3.5 flex w-8 justify-center">
          <svg viewBox="0 0 26 26" className="size-[26px]">
            <path d="M1 3h16v12H8l-3 3v-3H1z" fill="#fff" />
            <path d="M4 6.500h10M4 9h10M4 11.500h7" stroke="#222" />
            <circle cx="17" cy="18" r="7.500" fill="#303030" stroke="#888" />
            <text x="17" y="22" textAnchor="middle" fontSize="11" fill="#fff">3</text>
          </svg>
        </button>
        <span className="mr-1 ml-2 h-full w-px bg-[#666]" />
      </div>
    </div>
  );
}

export default function App() {
  return (
    <div className="flex min-h-screen flex-col bg-[#e4ebf2]">
      <TitleBar />
      <div className="flex items-center gap-[5px] bg-linear-to-r from-[#e0e8ee] to-[#ebf2fb] pt-px">
        <ToolGroup items={projectTools} />
        <ToolGroup>
          <label className="mr-px ml-px grid h-[21px] w-[97px] items-center border border-[#9eaab2] bg-[#e1e1e1]">
            <select aria-label="Design variant" className={`col-start-1 row-start-1 h-full w-full appearance-none pl-[3px] text-[11px] text-black ${sys}`}>
              <option>Base Design</option>
            </select>
            <svg viewBox="0 0 10 6" className="pointer-events-none col-start-1 row-start-1 mr-1 h-1.5 w-2.5 justify-self-end" fill="none" stroke="#444">
              <path d="M1 .8l4 4 4-4" />
            </svg>
          </label>
        </ToolGroup>
        <ToolGroup items={viewTools} />
        <ToolGroup items={editTools} />
        <ToolGroup items={designTools} />
      </div>
      <div className="flex h-[29px] items-stretch bg-linear-to-r from-[#e0e8ee] to-[#ebf2fb] pt-1">
        <svg viewBox="0 0 21 25" className="h-[25px] w-[21px] shrink-0" aria-hidden="true">
          <path d="M0 24.500L21 .5V25H0z" fill="#dcecf6" />
          <path d="M0 24.500L20.500 .5" stroke="#6f9fbe" />
        </svg>
        <div className="flex w-[158px] items-center border-t border-r border-[#6f9fbe] bg-linear-to-b from-[#e8f3fa] to-[#c4e0ef] pb-0.5">
          <svg viewBox="0 0 18 18" className="size-4" fill="none" aria-hidden="true">{schematicGlyph}</svg>
          <span className={`ml-0.5 text-xs font-bold text-[#26486c] ${sys}`}>Schematic Capture</span>
          <button aria-label="Close tab" className="ml-1.5">
            <svg viewBox="0 0 14 14" className="size-3.5" stroke="#5d5d5d" strokeWidth="2"><path d="M1.500 1.500l11 11M12.500 1.500l-11 11" /></svg>
          </button>
        </div>
        <div className="flex-1 border-b border-[#6f9fbe]" />
      </div>
      <div className="h-1.5 bg-[#b9d9ea]" />
      <main className="flex flex-1">
        <ModeBar />
        <OrientationBar />
        <SidePanel />
        <div className="flex min-w-0 flex-1 bg-[#aacbdf] pr-1 pl-1">
          <div className="flex-1 overflow-hidden border border-[#6b6b68] bg-[#dfdfd0] [contain:size]">
            <Schematic />
          </div>
        </div>
      </main>
      <StatusBar />
      <Taskbar />
    </div>
  );
}
